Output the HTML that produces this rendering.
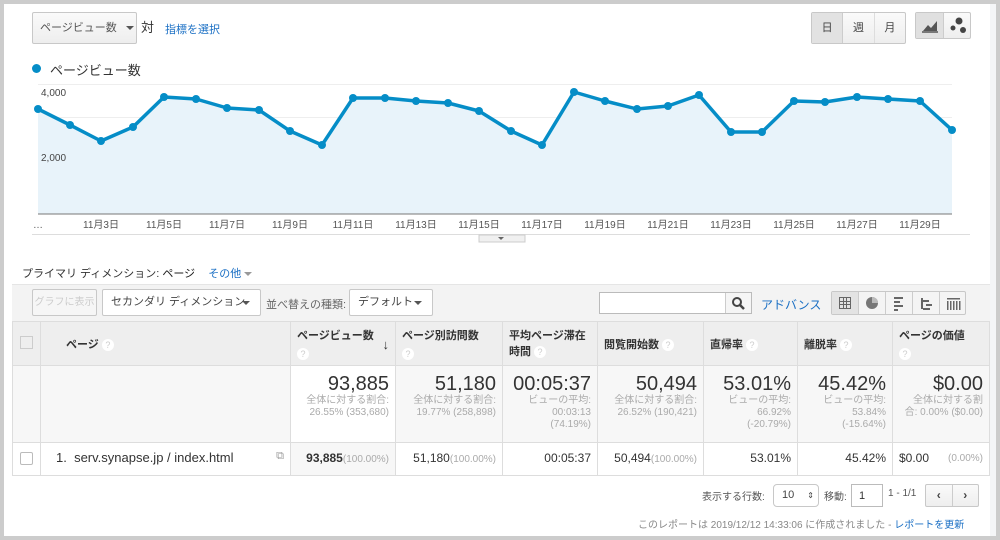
<!DOCTYPE html>
<html><head><meta charset="utf-8"><style>
*{box-sizing:border-box;margin:0;padding:0}
body{width:1000px;height:540px;background:#ccc;font-family:"Liberation Sans","Noto Sans CJK JP",sans-serif;position:relative;overflow:hidden;color:#333}
.main{position:absolute;left:4px;top:4px;width:986px;height:532px;background:#fff}
.rstrip{position:absolute;left:990px;top:4px;width:6px;height:532px;background:#f4f5f7}
.abs{position:absolute;white-space:nowrap}
.btn{position:absolute;white-space:nowrap;border:1px solid #c8c8c8;border-radius:2px;background:linear-gradient(#fafafa,#eee);font-size:11px;color:#444}
.caret{display:inline-block;width:0;height:0;border-left:4px solid transparent;border-right:4px solid transparent;border-top:4px solid #555;vertical-align:middle}
.link{color:#1a6fc4}
table{border-collapse:collapse;position:absolute;left:12px;top:321px;width:978px;font-size:11px}
td{border:1px solid #ddd;vertical-align:top}
.h td{background:#eee;height:44px;font-weight:bold;font-size:11px;padding:5px 6px}
.q{display:inline-block;width:12px;height:12px;border-radius:6px;background:#fff;color:#ccc;font-size:9px;text-align:center;line-height:12px;font-weight:normal}
.t td{background:#f7f7f7;height:77px;text-align:right;padding:7px 6px}
.big{font-size:20px;color:#333;line-height:22px}
.sm{font-size:10px;color:#aaa;line-height:12px}
.d td{height:33px;text-align:right;padding:8px 6px;font-size:12px}
.g{color:#aaa;font-size:10px}
</style></head><body>
<div class="main"></div><div class="rstrip"></div>
<div class="btn" style="left:32px;top:12px;width:105px;height:32px;line-height:30px;padding-left:7px;color:#555">ページビュー数 <span class="caret" style="margin-left:6px"></span></div>
<div class="abs" style="left:141px;top:17px;font-size:13px">対</div>
<div class="abs link" style="left:165px;top:21px;font-size:11px">指標を選択</div>
<div class="btn" style="left:811px;top:12px;width:95px;height:32px;display:flex;font-size:11px">
<div style="flex:1;text-align:center;line-height:30px;background:#e2e2e2;border-right:1px solid #ccc">日</div><div style="flex:1;text-align:center;line-height:30px;border-right:1px solid #ddd">週</div><div style="flex:1;text-align:center;line-height:30px">月</div></div>
<div class="btn" style="left:915px;top:12px;width:56px;height:27px;display:flex">
<div style="flex:1;background:#e0e0e0;border-right:1px solid #ccc;position:relative"><svg width="27" height="25"><path d="M7 18 L12 12 L15 15 L21 8 L21 18Z" fill="#555"/><path d="M6 19 H22" stroke="#555" stroke-width="1.5"/></svg></div>
<div style="flex:1;position:relative"><svg width="27" height="25"><circle cx="15" cy="8" r="3.5" fill="#444"/><circle cx="9" cy="15" r="2.5" fill="#444"/><circle cx="19" cy="17" r="3" fill="#444"/></svg></div></div>
<div class="abs" style="left:32px;top:64px;width:9px;height:9px;border-radius:5px;background:#058dc7"></div>
<div class="abs" style="left:50px;top:60px;font-size:13px">ページビュー数</div>
<svg class="abs" style="left:0;top:0" width="1000" height="245">
<g stroke="#eee" stroke-width="1"><line x1="38" y1="84.5" x2="952" y2="84.5"/><line x1="38" y1="117.5" x2="952" y2="117.5"/><line x1="38" y1="150.5" x2="952" y2="150.5"/><line x1="38" y1="181.5" x2="952" y2="181.5"/></g>
<path d="M38 109 L70 125 L101 141 L133 127 L164 97 L196 99 L227 108 L259 110 L290 131 L322 145 L353 98 L385 98 L416 101 L448 103 L479 111 L511 131 L542 145 L574 92 L605 101 L637 109 L668 106 L699 95 L731 132 L762 132 L794 101 L825 102 L857 97 L888 99 L920 101 L952 130 L952 214 L38 214Z" fill="#e8f3fa"/>
<line x1="38" y1="214" x2="952" y2="214" stroke="#777" stroke-width="1"/>
<line x1="32" y1="234.5" x2="970" y2="234.5" stroke="#ddd"/>
<path d="M38 109 L70 125 L101 141 L133 127 L164 97 L196 99 L227 108 L259 110 L290 131 L322 145 L353 98 L385 98 L416 101 L448 103 L479 111 L511 131 L542 145 L574 92 L605 101 L637 109 L668 106 L699 95 L731 132 L762 132 L794 101 L825 102 L857 97 L888 99 L920 101 L952 130" fill="none" stroke="#058dc7" stroke-width="3.5" stroke-linejoin="round"/>
<g fill="#058dc7"><circle cx="38" cy="109" r="4"/><circle cx="70" cy="125" r="4"/><circle cx="101" cy="141" r="4"/><circle cx="133" cy="127" r="4"/><circle cx="164" cy="97" r="4"/><circle cx="196" cy="99" r="4"/><circle cx="227" cy="108" r="4"/><circle cx="259" cy="110" r="4"/><circle cx="290" cy="131" r="4"/><circle cx="322" cy="145" r="4"/><circle cx="353" cy="98" r="4"/><circle cx="385" cy="98" r="4"/><circle cx="416" cy="101" r="4"/><circle cx="448" cy="103" r="4"/><circle cx="479" cy="111" r="4"/><circle cx="511" cy="131" r="4"/><circle cx="542" cy="145" r="4"/><circle cx="574" cy="92" r="4"/><circle cx="605" cy="101" r="4"/><circle cx="637" cy="109" r="4"/><circle cx="668" cy="106" r="4"/><circle cx="699" cy="95" r="4"/><circle cx="731" cy="132" r="4"/><circle cx="762" cy="132" r="4"/><circle cx="794" cy="101" r="4"/><circle cx="825" cy="102" r="4"/><circle cx="857" cy="97" r="4"/><circle cx="888" cy="99" r="4"/><circle cx="920" cy="101" r="4"/><circle cx="952" cy="130" r="4"/></g>
<g font-family="Liberation Sans,Noto Sans CJK JP,sans-serif" font-size="10" fill="#444"><text x="41" y="96">4,000</text><text x="41" y="161">2,000</text></g>
<g font-family="Liberation Sans,Noto Sans CJK JP,sans-serif" font-size="10" fill="#555" text-anchor="middle"><text x="38" y="228">…</text><text x="101" y="228">11月3日</text><text x="164" y="228">11月5日</text><text x="227" y="228">11月7日</text><text x="290" y="228">11月9日</text><text x="353" y="228">11月11日</text><text x="416" y="228">11月13日</text><text x="479" y="228">11月15日</text><text x="542" y="228">11月17日</text><text x="605" y="228">11月19日</text><text x="668" y="228">11月21日</text><text x="731" y="228">11月23日</text><text x="794" y="228">11月25日</text><text x="857" y="228">11月27日</text><text x="920" y="228">11月29日</text></g>
<rect x="479" y="235" width="46" height="7" fill="#f0f0f0" stroke="#ccc"/><path d="M498 237 h6 l-3 3z" fill="#666"/>
</svg>
<div class="abs" style="left:22px;top:265px;font-size:11px">プライマリ ディメンション: <b style="font-weight:normal;color:#222">ページ</b> <span class="link" style="margin-left:10px">その他</span> <span class="caret" style="border-top-color:#999"></span></div>
<div class="abs" style="left:12px;top:284px;width:978px;height:37px;background:#f3f3f3;border-top:1px solid #e5e5e5"></div>
<div class="btn" style="left:32px;top:289px;width:65px;height:27px;line-height:25px;text-align:center;color:#ccc;font-size:10px;background:#f6f6f6;overflow:hidden">グラフに表示</div>
<div class="btn" style="left:102px;top:289px;width:159px;height:27px;line-height:25px;padding-left:8px;background:#fff">セカンダリ ディメンション <span class="caret" style="position:absolute;right:10px;top:11px"></span></div>
<div class="abs" style="left:266px;top:296px;font-size:11px;color:#666">並べ替えの種類:</div>
<div class="btn" style="left:349px;top:289px;width:84px;height:27px;line-height:25px;padding-left:8px;background:#fff">デフォルト <span class="caret" style="position:absolute;right:10px;top:11px"></span></div>
<div class="abs" style="left:599px;top:292px;width:153px;height:22px;border:1px solid #bbb;background:#fff"><div style="position:absolute;right:0;top:0;width:26px;height:20px;border-left:1px solid #ccc;background:#f5f5f5"><svg width="26" height="20"><circle cx="11" cy="9" r="4" fill="none" stroke="#444" stroke-width="2"/><path d="M14 12 L18 16" stroke="#444" stroke-width="2.5"/></svg></div></div>
<div class="abs link" style="left:761px;top:296px;font-size:12px">アドバンス</div>
<div class="btn" style="left:831px;top:291px;width:135px;height:24px;display:flex;background:#f4f4f4">
<div style="flex:1;border-right:1px solid #ccc;background:#e3e3e3"><svg width="26" height="22"><g fill="none" stroke="#666"><rect x="7.5" y="5.5" width="11" height="11"/><path d="M11.5 5.5v11M14.5 5.5v11M7.5 9.5h11M7.5 12.5h11"/></g></svg></div>
<div style="flex:1;border-right:1px solid #ccc"><svg width="26" height="22"><circle cx="13" cy="11" r="6" fill="#777"/><path d="M13 11V5A6 6 0 0 1 19 11Z" fill="#bbb"/></svg></div>
<div style="flex:1;border-right:1px solid #ccc"><svg width="26" height="22"><g fill="#666"><rect x="8" y="5" width="9" height="2"/><rect x="8" y="9" width="6" height="2"/><rect x="8" y="13" width="9" height="2"/><rect x="8" y="17" width="4" height="2"/></g></svg></div>
<div style="flex:1;border-right:1px solid #ccc"><svg width="26" height="22"><g fill="#666"><rect x="8" y="6" width="2" height="11"/><rect x="10" y="8" width="6" height="2"/><rect x="13" y="12" width="6" height="2"/><rect x="10" y="16" width="7" height="2"/></g></svg></div>
<div style="flex:1"><svg width="26" height="22"><g fill="#666"><rect x="7" y="6" width="13" height="1.5"/><rect x="7" y="9" width="1.5" height="9"/><rect x="10" y="9" width="1.5" height="9"/><rect x="13" y="9" width="1.5" height="9"/><rect x="16" y="9" width="1.5" height="9"/><rect x="19" y="9" width="1.5" height="9"/></g></svg></div></div>
<table>
<tr class="h"><td style="width:28px;padding:14px 7px"><div style="width:13px;height:13px;border:1px solid #ccc;background:#eee"></div></td>
<td style="width:250px;padding-left:25px;padding-top:14px">ページ <span class="q">?</span></td>
<td style="width:105px;position:relative">ページビュー数<br><span class="q" style="margin-top:5px">?</span><span style="position:absolute;right:6px;top:15px;font-size:13px">↓</span></td>
<td style="width:107px">ページ別訪問数<br><span class="q" style="margin-top:5px">?</span></td>
<td style="width:95px">平均ページ滞在<br>時間 <span class="q" style="margin-top:3px">?</span></td>
<td style="width:106px;padding-top:14px">閲覧開始数 <span class="q">?</span></td>
<td style="width:94px;padding-top:14px">直帰率 <span class="q">?</span></td>
<td style="width:95px;padding-top:14px">離脱率 <span class="q">?</span></td>
<td>ページの価値<br><span class="q" style="margin-top:5px">?</span></td></tr>
<tr class="t"><td></td><td></td>
<td style="background:#fff"><div class="big">93,885</div><div class="sm">全体に対する割合:<br>26.55% (353,680)</div></td>
<td><div class="big">51,180</div><div class="sm">全体に対する割合:<br>19.77% (258,898)</div></td>
<td><div class="big">00:05:37</div><div class="sm">ビューの平均:<br>00:03:13<br>(74.19%)</div></td>
<td><div class="big">50,494</div><div class="sm">全体に対する割合:<br>26.52% (190,421)</div></td>
<td><div class="big">53.01%</div><div class="sm">ビューの平均:<br>66.92%<br>(-20.79%)</div></td>
<td><div class="big">45.42%</div><div class="sm">ビューの平均:<br>53.84%<br>(-15.64%)</div></td>
<td><div class="big">$0.00</div><div class="sm">全体に対する割<br>合: 0.00% ($0.00)</div></td></tr>
<tr class="d"><td style="padding:9px 7px"><div style="width:13px;height:13px;border:1px solid #bbb;border-radius:2px;background:#fff"></div></td>
<td style="text-align:left;padding-left:15px;font-size:13px;padding-top:7px">1.&nbsp; serv.synapse.jp / index.html<span style="float:right;color:#999;font-size:11px">⧉</span></td>
<td style="background:#f7f7f7"><b>93,885</b><span class="g">(100.00%)</span></td>
<td>51,180<span class="g">(100.00%)</span></td>
<td>00:05:37</td>
<td>50,494<span class="g">(100.00%)</span></td>
<td>53.01%</td><td>45.42%</td>
<td style="text-align:left">$0.00<span class="g" style="float:right;margin-top:2px">(0.00%)</span></td></tr>
</table>
<div class="abs" style="left:702px;top:488px;font-size:10px;color:#555">表示する行数:</div>
<div class="btn" style="left:773px;top:484px;width:46px;height:23px;line-height:21px;padding-left:8px;font-size:11px;border-radius:4px;background:#fff">10 <span style="float:right;margin-right:4px;font-size:8px">⇕</span></div>
<div class="abs" style="left:824px;top:488px;font-size:10px;color:#555">移動:</div>
<div class="abs" style="left:851px;top:484px;width:32px;height:23px;border:1px solid #bbb;font-size:11px;padding:5px 7px">1</div>
<div class="abs" style="left:888px;top:488px;font-size:10px;color:#555">1 - 1/1</div>
<div class="btn" style="left:925px;top:484px;width:54px;height:23px;display:flex;font-weight:bold;font-size:12px"><div style="flex:1;text-align:center;line-height:20px;border-right:1px solid #ccc">‹</div><div style="flex:1;text-align:center;line-height:20px">›</div></div>
<div class="abs" style="left:638px;top:516px;font-size:10px;color:#888">このレポートは 2019/12/12 14:33:06 に作成されました - <span class="link">レポートを更新</span></div>
</body></html>
